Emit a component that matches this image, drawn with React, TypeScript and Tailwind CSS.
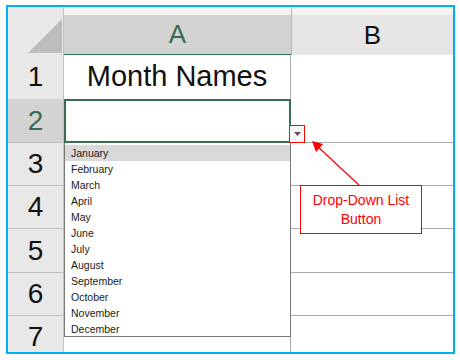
import { FC } from "react";

const GREEN = "#386e52";
const months = [
  "January",
  "February",
  "March",
  "April",
  "May",
  "June",
  "July",
  "August",
  "September",
  "October",
  "November",
  "December",
];

// row number + its height in px
const rows: { n: number; h: string }[] = [
  { n: 1, h: "h-[44px]" },
  { n: 2, h: "h-[44px]" },
  { n: 3, h: "h-[43px]" },
  { n: 4, h: "h-[43px]" },
  { n: 5, h: "h-[44px]" },
  { n: 6, h: "h-[43px]" },
  { n: 7, h: "h-[36px]" },
];

const Row: FC<{ n: number; h: string }> = ({ n, h }) => {
  const selected = n === 2;
  return (
    <div className={`grid grid-cols-[56px_227px_162px] ${h}`}>
      {/* ROW NUMBER */}
      <div
        className={`flex items-center justify-center border-r border-b border-[#c0c0c0] text-[28px] ${
          selected ? "bg-[#d3d3d3] text-[#386e52]" : "bg-[#e8e8e8] text-[#111]"
        }`}
      >
        {n}
      </div>

      {/* COLUMN A */}
      {selected ? (
        <div className="border-2 border-[#386e52] bg-white" />
      ) : (
        <div className="flex items-center justify-center border-r border-r-[#ababab] border-b border-b-[#d6d6d6] bg-white text-[29px] text-[#111]">
          {n === 1 ? "Month Names" : ""}
        </div>
      )}

      {/* COLUMN B */}
      <div className="border-b border-[#ababab] bg-white" />
    </div>
  );
};

export default function App() {
  return (
    <div
      className="w-[460px] h-[360px] bg-white pt-[5px] pl-[6px]"
      style={{ fontFamily: '"Liberation Sans", Arial, sans-serif' }}
    >
      <div className="relative w-[449px] h-[349px] border-2 border-[#00b0f0] overflow-hidden bg-white">
        {/* HEADER */}
        <div className="grid grid-cols-[56px_227px_162px] h-[48px]">
          <div className="border-r border-b border-[#c0c0c0] bg-[#e8e8e8]">
            <svg width="55" height="47" viewBox="0 0 55 47">
              <polygon points="20,46 54,46 54,12" fill="#bdbdbd" />
            </svg>
          </div>
          <div className="flex flex-col">
            <div className="h-[8px] bg-[#f4f4f4]" />
            <div
              className="flex flex-1 items-center justify-center bg-[#d3d3d3] border-b-2 text-[26px]"
              style={{ borderColor: GREEN, color: GREEN }}
            >
              A
            </div>
          </div>
          <div className="flex flex-col border-l border-[#b8b8b8]">
            <div className="h-[8px] bg-[#f4f4f4]" />
            <div className="flex flex-1 items-center justify-center bg-[#e6e6e6] border-b border-[#ababab] text-[26px] text-[#111]">
              B
            </div>
          </div>
        </div>

        {/* ROWS */}
        {rows.map((r) => (
          <Row key={r.n} n={r.n} h={r.h} />
        ))}

        {/* DROP-DOWN BUTTON */}
        <div className="absolute left-[281px] top-[118px] w-[16px] h-[18px] border-[1.5px] border-[#ff0000] bg-[#f7f7f7] flex items-center justify-center">
          <svg width="7" height="4" viewBox="0 0 7 4">
            <polygon points="0,0 7,0 3.5,4" fill="#555" />
          </svg>
        </div>

        {/* DROP-DOWN LIST */}
        <div className="absolute left-[56px] top-[136px] w-[227px] h-[194px] bg-white border border-t-0 border-[#7a7a7a] pt-[2px] text-[10.5px] text-[#1a1a1a]">
          {months.map((m, i) => (
            <div
              key={m}
              className={`h-[16px] leading-[16px] pl-[6px] ${
                i === 0 ? "bg-[#d9d9d9]" : ""
              }`}
            >
              {m}
            </div>
          ))}
        </div>

        {/* ARROW */}
        <svg
          className="absolute left-0 top-0 pointer-events-none"
          width="445"
          height="345"
          viewBox="0 0 445 345"
        >
          <line x1="351" y1="178" x2="309" y2="139" stroke="#ff0000" strokeWidth="1.2" />
          <polygon points="304,134 315,137 308,145" fill="#ff0000" />
        </svg>

        {/* CALLOUT */}
        <div className="absolute left-[292px] top-[178px] w-[122px] h-[49px] border-[1.5px] border-[#ff0000] bg-white flex flex-col items-center justify-center text-[14px] leading-[19px] text-[#ff0000]">
          <span>Drop-Down List</span>
          <span>Button</span>
        </div>
      </div>
    </div>
  );
}
